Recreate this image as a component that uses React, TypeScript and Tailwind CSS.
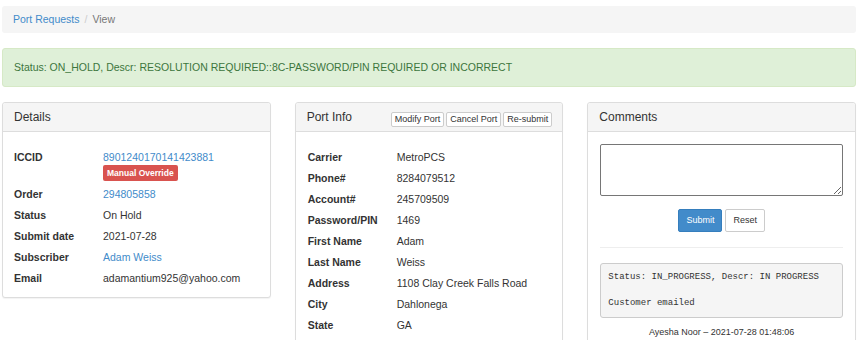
const font = "font-['Liberation_Sans',Arial,sans-serif]";

const Row = ({ label, children }: { label: string; children: React.ReactNode }) => (
  <div className="flex h-[21px] items-center leading-[15px]">
    <div className="w-[89px] shrink-0 font-bold">{label}</div>
    <div>{children}</div>
  </div>
);

const Panel = ({
  title,
  actions,
  children,
}: {
  title: string;
  actions?: React.ReactNode;
  children: React.ReactNode;
}) => (
  <div className="rounded-[3px] border border-[#ddd] bg-white shadow-[0_1px_1px_rgba(0,0,0,0.05)]">
    <div className="flex h-[29px] justify-between rounded-t-[3px] border-b border-[#ddd] bg-[#f5f5f5] pl-[11px] pr-[10px]">
      <div className="self-center text-[12px] leading-[14px] text-[#333]">{title}</div>
      {actions}
    </div>
    {children}
  </div>
);

const XsButton = ({ children }: { children: React.ReactNode }) => (
  <button className="h-[15px] rounded-[2px] border border-[#ccc] bg-white px-[3px] text-[9px] leading-[13px] text-[#333]">
    {children}
  </button>
);

export default function App() {
  return (
    <div className={`${font} h-[340px] overflow-hidden bg-white pl-[2px] pr-[6px] pt-[6px] text-[10.5px] text-[#333]`}>
      <div className="rounded-[3px] bg-[#f5f5f5] px-[11px] py-[6px] leading-[15px]">
        <a className="text-[#428bca]">Port Requests</a>
        <span className="px-[5px] text-[#ccc]">/</span>
        <span className="text-[#777]">View</span>
      </div>

      <div className="mt-[15px] rounded-[3px] border border-[#d6e9c6] bg-[#dff0d8] px-[11px] py-[11px] leading-[15px] text-[#3c763d]">
        Status: ON_HOLD, Descr: RESOLUTION REQUIRED::8C-PASSWORD/PIN REQUIRED OR INCORRECT
      </div>

      <div className="mt-[15px] grid grid-cols-3 items-start gap-6">
        <Panel title="Details">
          <div className="px-[11px] pb-[8px] pt-[15px]">
            <div className="flex py-[3px] leading-[15px]">
              <div className="w-[89px] shrink-0 font-bold">ICCID</div>
              <div>
                <a className="block text-[#428bca]">8901240170141423881</a>
                <div className="block h-[16px] w-fit rounded-[2px] bg-[#d9534f] px-[4px] text-[8.5px] font-bold leading-[16px] text-white">
                  Manual Override
                </div>
              </div>
            </div>
            <Row label="Order">
              <a className="text-[#428bca]">294805858</a>
            </Row>
            <Row label="Status">On Hold</Row>
            <Row label="Submit date">2021-07-28</Row>
            <Row label="Subscriber">
              <a className="text-[#428bca]">Adam Weiss</a>
            </Row>
            <Row label="Email">adamantium925@yahoo.com</Row>
          </div>
        </Panel>

        <Panel
          title="Port Info"
          actions={
            <div className="mt-[9px] flex gap-[2px] self-start">
              <XsButton>Modify Port</XsButton>
              <XsButton>Cancel Port</XsButton>
              <XsButton>Re-submit</XsButton>
            </div>
          }
        >
          <div className="px-[12px] pb-[8px] pt-[15px]">
            <Row label="Carrier">MetroPCS</Row>
            <Row label="Phone#">8284079512</Row>
            <Row label="Account#">245709509</Row>
            <Row label="Password/PIN">1469</Row>
            <Row label="First Name">Adam</Row>
            <Row label="Last Name">Weiss</Row>
            <Row label="Address">1108 Clay Creek Falls Road</Row>
            <Row label="City">Dahlonega</Row>
            <Row label="State">GA</Row>
          </div>
        </Panel>

        <Panel title="Comments">
          <div className="px-[12px] pb-[10px] pt-[12px]">
            <textarea className="block h-[52px] w-full rounded-[2px] border border-[#767676] bg-white" />
            <div className="mt-[13px] flex justify-center gap-[3px]">
              <button className="h-[23px] rounded-[2px] border border-[#357ebd] bg-[#428bca] px-[7px] text-[9px] text-white">
                Submit
              </button>
              <button className="h-[23px] rounded-[2px] border border-[#ccc] bg-white px-[7px] text-[9px] text-[#333]">
                Reset
              </button>
            </div>
            <hr className="mt-[15px] border-t border-[#eee]" />
            <pre className="mt-[15px] whitespace-pre-wrap rounded-[3px] border border-[#ccc] bg-[#f5f5f5] px-[7px] py-[7px] font-['Liberation_Mono',monospace] text-[9px] leading-[13px] text-[#333]">
              {"Status: IN_PROGRESS, Descr: IN PROGRESS\n\nCustomer emailed"}
            </pre>
            <div className="mt-[8px] text-center text-[9px] leading-[13px]">
              Ayesha Noor – 2021-07-28 01:48:06
            </div>
          </div>
        </Panel>
      </div>
    </div>
  );
}
